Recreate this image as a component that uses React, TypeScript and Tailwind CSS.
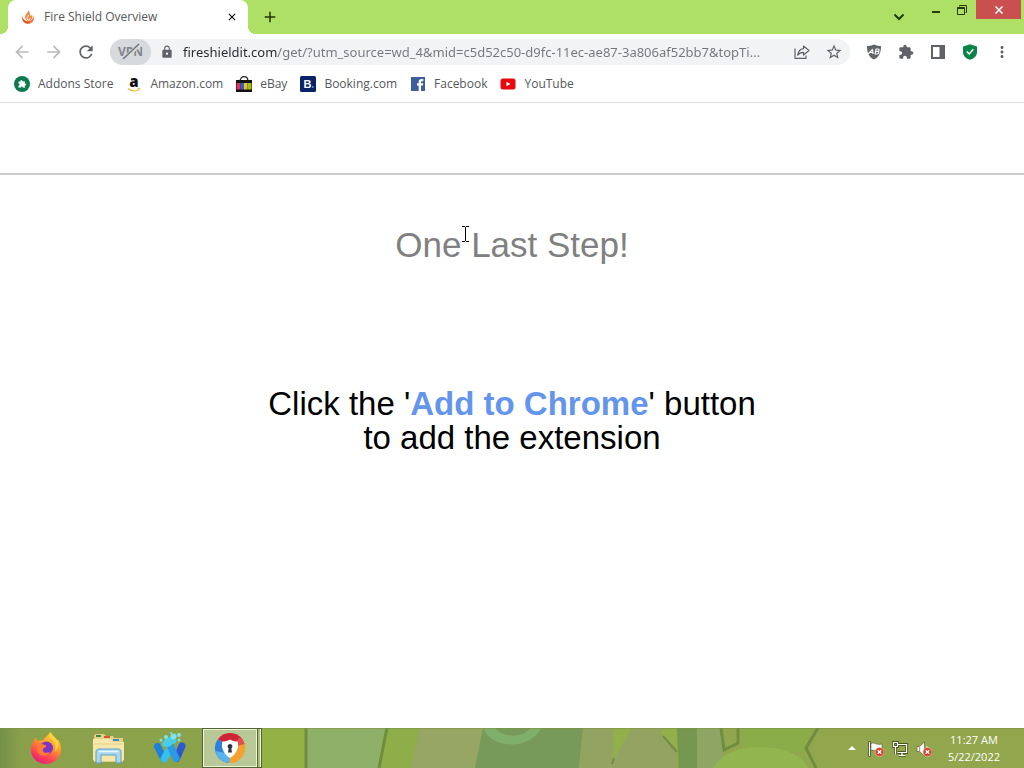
import { useState } from 'react';
import type { ReactNode } from 'react';
import {
  MdAdd,
  MdArrowBack,
  MdArrowForward,
  MdClose,
  MdExtension,
  MdLock,
  MdMoreVert,
  MdRefresh,
  MdStarBorder,
} from 'react-icons/md';

const PAGE_URL =
  'fireshieldit.com/get/?utm_source=wd_4&mid=c5d52c50-d9fc-11ec-ae87-3a806af52bb7&topTi...';

/* ---------- Icons ---------- */

const FlameIcon = () => (
  <svg className="w-4 h-4" viewBox="0 0 16 16" aria-hidden="true">
    <path d="M2 6c-1 5 2 9 6 9s7-4 6-9c-.3 4-3 6-6 6S2.500 10 2 6z" fill="#e8743b" />
    <path d="M8 1c1 2-3 4-3 7 0 2 1.500 4 3.500 4S12.500 10 12.500 8c0-1-.5-2-1-2.500 0 1-.5 1.500-1 1.500C10 5 10 3 8 1z" fill="#f08a4b" />
    <path d="M8.500 6c0 1.500-1.500 2-1.500 3.500 0 .8.600 1.500 1.500 1.500S10 10.300 10 9.500" fill="none" stroke="#fff" strokeWidth="1" />
    <path d="M3 10.500c1 2 3 3 5 2.800" fill="none" stroke="#b9492c" strokeWidth="1" />
  </svg>
);

const ShareIcon = () => (
  <svg className="w-4 h-4" viewBox="0 0 16 16" fill="none" stroke="#5f6368" strokeWidth="1.200" strokeLinejoin="round" aria-hidden="true">
    <path d="M1 4.500V14.300H12V11.500" />
    <path d="M9.500 2L15 6.500L9.500 11V8.300C6.500 8.300 5 9.300 3.700 11.200C4.200 7.500 6.200 5 9.500 4.600Z" />
  </svg>
);

const AdblockIcon = () => (
  <svg className="w-4 h-4" viewBox="0 0 16 16" aria-hidden="true">
    <path d="M8 0.500C5.500 1.500 3 2 1 2c0 6 1.500 11 7 13.500C13.500 13 15 8 15 2 13 2 10.500 1.500 8 .5z" fill="#5f6368" />
    <g fill="none" stroke="#fff" strokeWidth="1.200" strokeLinejoin="round">
      <path d="M2 10L6.500 5.500L7 10M4 8.500H7" />
      <path d="M9 10L10 5h2.200c1.400.2 1.200 2.200-.3 2.300H10h1.900c1.400.2 1 2.600-.6 2.700z" />
    </g>
  </svg>
);

const SidePanelIcon = () => (
  <svg className="w-4 h-4" viewBox="0 0 16 16" aria-hidden="true">
    <path d="M1 1h14v14H1zM3 3v10h6.500V3z" fill="#5f6368" fillRule="evenodd" />
  </svg>
);

const ShieldCheckIcon = () => (
  <svg className="w-4 h-4" viewBox="0 0 16 16" aria-hidden="true">
    <path d="M8 .3L15 2.500V8c0 4-3 6.600-7 7.800C4 14.600 1 12 1 8V2.500z" fill="#0a8449" />
    <path d="M4.800 7.600L7.200 10L11.300 5.300" fill="none" stroke="#fff" strokeWidth="1.500" />
  </svg>
);

const AddonsIcon = () => (
  <svg className="w-4 h-4" viewBox="0 0 16 16" aria-hidden="true">
    <circle cx="8" cy="8" r="8" fill="#0c7c50" />
    <path d="M4.500 5.500h2c-.5-2 2-2.200 1.800-.2l2.700.2-.3 2c2-.2 2 2.300 0 2l.3 2.300-2.300-.3c0-1.500-2-1.500-2 .3l-2.200-.3v-2c1.600 0 1.600-2 0-2z" fill="#fff" />
  </svg>
);

const AmazonIcon = () => (
  <svg className="w-4 h-4 overflow-visible" viewBox="0 0 16 16" aria-hidden="true">
    <text x="8" y="11" textAnchor="middle" fontFamily="Open Sans, sans-serif" fontWeight="800" fontSize="15" fill="#111">a</text>
    <path d="M2 12.500c3.500 3 8 3 11 1" fill="none" stroke="#f2b632" strokeWidth="1.200" />
    <path d="M11.500 12.500l2.300-.1-.6 2" fill="none" stroke="#f2b632" strokeWidth=".8" />
  </svg>
);

const EbayIcon = () => (
  <svg className="w-4 h-4" viewBox="0 0 16 16" aria-hidden="true">
    <path d="M4 5.500C4-1 12-1 12 5.500" fill="none" stroke="#222" strokeWidth="1.200" />
    <path d="M0 4h16v12H0z" fill="#111" />
    <path d="M.5 7h4v6.500h-4z" fill="#e0334c" />
    <path d="M4.500 7H8v6.500H4.500z" fill="#2a64c8" />
    <path d="M8 7h3.500v6.500H8z" fill="#e9c51d" />
    <path d="M11.500 7h4v6.500h-4z" fill="#a9b82a" />
  </svg>
);

const BookingIcon = () => (
  <svg className="w-4 h-4" viewBox="0 0 16 16" aria-hidden="true">
    <rect width="16" height="16" rx="1.500" fill="#0a2468" />
    <text x="3.500" y="12" fontFamily="Liberation Sans, sans-serif" fontWeight="700" fontSize="11" fill="#fff">B</text>
    <circle cx="12.800" cy="11" r="1" fill="#3fa9ea" />
  </svg>
);

const FacebookIcon = () => (
  <svg className="w-4 h-4" viewBox="0 0 16 16" aria-hidden="true">
    <path d="M1 1h14v14H1z" fill="#3f5c9f" />
    <path d="M8.700 15V9.500H7V7.300h1.700V5.700C8.700 3.900 9.800 3 11.500 3H13.300v2.200H12c-.8 0-1 .4-1 1v1.100h2.200l-.3 2.200H11V15z" fill="#fff" />
  </svg>
);

const YoutubeIcon = () => (
  <svg className="w-4 h-4" viewBox="0 0 16 16" aria-hidden="true">
    <rect x="0.500" y="2.500" width="15" height="11" rx="2.500" fill="#e8090d" />
    <path d="M6.400 5.700v4.600L10.400 8z" fill="#fff" />
  </svg>
);

const FirefoxIcon = () => (
  <svg className="w-8 h-8" viewBox="0 0 32 32" aria-hidden="true">
    <defs>
      <linearGradient id="fox" x1="0.8" y1="0" x2="0.300" y2="1">
        <stop offset="0" stopColor="#ffe23f" />
        <stop offset=".4" stopColor="#ff9a2c" />
        <stop offset=".75" stopColor="#ff4553" />
        <stop offset="1" stopColor="#e3177c" />
      </linearGradient>
    </defs>
    <path d="M20 0c1 3 3 4 5.500 7C27 8 28 9 28 7.500c3 4 3.500 9 2.500 13C29 27 23 32 16 32S2 27 1 20c-.5-4 .5-8 3-11l.6-3C6 6.500 7 8 7.500 9c2-1 4-1 5.500-.5C14 6 18 4 20 0z" fill="url(#fox)" />
    <circle cx="16.500" cy="16" r="6.500" fill="#7a35c9" />
    <path d="M7 12c3-2 5 .5 8 1 2 .5 2 1.500 0 2.500-2 1-2.500 2-2 3.500 1 2.500 5 2 7 1-3 6-13 4.500-13-3z" fill="#ff7a36" />
    <path d="M19 5c6 4 8 9 5.500 15 5-4 5-11 0-15-2-2-3-3-3.500-5-1 2-2 3-2 5z" fill="#ffd33a" />
  </svg>
);

const ExplorerIcon = () => (
  <svg className="w-8 h-8" viewBox="0 0 32 32" aria-hidden="true">
    <path d="M2 4c0-1 1-2 2-2h8l2 2h7l1 2h9v24H2z" fill="#e6cf7e" />
    <path d="M4 3h5v2H4z" fill="#3d8a48" />
    <path d="M12 4h6v2h-6z" fill="#cf5b3a" />
    <path d="M21 7h6v2h-6z" fill="#3a8dd0" />
    <path d="M1 7h18l2 3h11v17c0 1-1 2-2 2H3c-1 0-2-1-2-2z" fill="#f6e8ab" />
    <path d="M2 12h29" stroke="#e3ce87" />
    <path d="M4 31V20c0-2 1-3 3-3h19c2 0 3 1 3 3v11h-5v-8H9v8z" fill="#a8d7ee" stroke="#5c9fc9" />
    <path d="M7 19.500h19" stroke="#e8f8ff" strokeWidth="1.500" />
  </svg>
);

const WaveIcon = () => (
  <svg className="w-8 h-8" viewBox="0 0 32 32" aria-hidden="true">
    <g fill="none" strokeLinecap="round" strokeLinejoin="round">
      <path d="M3.500 14.500L9.500 26.500" stroke="#1f7fdc" strokeWidth="7" />
      <path d="M10 27L15.500 17" stroke="#35c0ee" strokeWidth="7" />
      <path d="M22.500 26.500L28 14" stroke="#2c58cf" strokeWidth="7" />
      <path d="M15.500 12L22 26.500" stroke="#2a9be4" strokeWidth="7" />
    </g>
    <path d="M8 12c2-5 7-8 12-6 2 1 3 3 2 5-4 0-5 4-9 4-3 0-5-1-5-3z" fill="#48cdea" />
    <g fill="#7fe2ef">
      <circle cx="12" cy="5" r="2" />
      <circle cx="19.500" cy="4.500" r="3" />
      <circle cx="25" cy="3" r="2" />
      <circle cx="25" cy="8" r="1.500" />
      <circle cx="7" cy="8" r="1.500" />
      <circle cx="17" cy="1" r="1" />
    </g>
  </svg>
);

const SecureBrowserIcon = () => (
  <svg className="w-8 h-8" viewBox="0 0 32 32" aria-hidden="true">
    <path d="M16 16L4 7A15 15 0 0 1 30.500 12z" fill="#cf2436" />
    <path d="M16 16L26 5a15 15 0 0 1 4.500 7l.5 4z" fill="#e34f4a" />
    <path d="M16 16l14.500-4A15 15 0 0 1 15 31z" fill="#f5a12f" />
    <path d="M16 16l-1 15A15 15 0 0 1 4 7z" fill="#2c80dc" />
    <path d="M16 22l-1 9A15 15 0 0 1 1.500 19z" fill="#55b5ef" />
    <path d="M16 7.500c2.500 1.500 5 2 7.500 2 2 5-1 13-7.500 16.500C9.500 22.500 6.500 14.500 8.500 9.500c2.500 0 5-.5 7.500-2z" fill="#fff" />
    <path d="M16 12a2.500 2.500 0 0 1 1.300 4.600L18 20.500h-4l.7-3.900A2.500 2.500 0 0 1 16 12z" fill="#2b3346" />
  </svg>
);

const ErrorBadge = () => (
  <g>
    <circle cx="11.500" cy="11" r="4.500" fill="#d5402b" stroke="#f3d9c9" strokeWidth=".6" />
    <path d="M9.700 9.200l3.600 3.600M13.300 9.200l-3.600 3.600" stroke="#fff" strokeWidth="1.300" />
  </g>
);

const FlagIcon = () => (
  <svg className="w-4 h-4" viewBox="0 0 16 16" aria-hidden="true">
    <path d="M1.500.5v15" stroke="#3c4a1c" strokeWidth="3" />
    <path d="M1.500 1v14" stroke="#fff" strokeWidth="1.300" />
    <path d="M3 2.500c4-1.500 5 2 11 .5v7c-5 1.500-7-2-11-.5z" fill="#fff" stroke="#55612f" strokeWidth=".6" />
    <ErrorBadge />
  </svg>
);

const NetworkIcon = () => (
  <svg className="w-4 h-4" viewBox="0 0 16 16" fill="none" aria-hidden="true">
    <path d="M6 3.500h8.500v8H5.500M10 11.500v2.500M6.500 14.300h7M1.500 1.500h4v4h-4zM3.500 5.500v8" stroke="#46531f" strokeWidth="2.800" />
    <path d="M6 3.500h8.500v8H5.500M10 11.500v2.500M6.500 14.300h7M1.500 1.500h4v4h-4zM3.500 5.500v8" stroke="#fff" strokeWidth="1.200" />
  </svg>
);

const SpeakerIcon = () => (
  <svg className="w-4 h-4" viewBox="0 0 16 16" aria-hidden="true">
    <path d="M1 5.500h2.500L8.500 1v14L3.500 10.500H1z" fill="#fff" stroke="#55612f" strokeWidth=".7" />
    <path d="M3.700 5.500v5" stroke="#8b9a5c" />
    <path d="M10.500 5c1 1 1 2 .8 3" fill="none" stroke="#fff" />
    <ErrorBadge />
  </svg>
);

/* ---------- Browser ---------- */

const TabStrip = () => (
  <header className="flex h-[34px] bg-[#aee065] pl-2">
    <div className="relative flex items-center w-60 h-full pl-3 pr-2 bg-white rounded-t-lg before:content-[''] before:absolute before:-left-2 before:bottom-0 before:size-2 before:bg-[radial-gradient(circle_at_0_0,#aee065_8px,#fff_8px)] after:content-[''] after:absolute after:-right-2 after:bottom-0 after:size-2 after:bg-[radial-gradient(circle_at_100%_0,#aee065_8px,#fff_8px)]">
      <FlameIcon />
      <span className="flex-1 pl-2 truncate text-[#54585c]">Fire Shield Overview</span>
      <button className="flex items-center justify-center w-4 h-4" aria-label="Close tab">
        <MdClose className="w-3 h-3" />
      </button>
    </div>
    <button className="flex items-center justify-center w-11 text-[#22330c]" aria-label="New tab">
      <MdAdd className="w-[18px] h-[18px]" />
    </button>
    <div className="flex items-start ml-auto text-[#26380f]">
      <button className="flex items-center justify-center w-9 h-[34px] mr-[6px]" aria-label="Search tabs">
        <svg className="w-3 h-3" viewBox="0 0 12 12" fill="none" stroke="currentColor" strokeWidth="2">
          <path d="M1.500 3.500L6 8l4.500-4.500" />
        </svg>
      </button>
      <button className="flex items-center justify-center w-[26px] h-5" aria-label="Minimize">
        <svg className="w-3 h-3" viewBox="0 0 12 12" fill="currentColor">
          <path d="M2 7h8v2H2z" />
        </svg>
      </button>
      <button className="flex items-center justify-center w-[26px] h-5 mr-px" aria-label="Restore">
        <svg className="w-3 h-3" viewBox="0 0 12 12" fill="none" stroke="currentColor">
          <path d="M3.500 2.500v-1h7v7h-1" />
          <path d="M1.500 3.500h7v7h-7zM1.500 4.500h7" />
        </svg>
      </button>
      <button className="flex items-center justify-center w-[45px] h-[19px] mr-[3px] bg-[#c9504f] text-white" aria-label="Close window">
        <svg className="w-2 h-2" viewBox="0 0 8 8" fill="none" stroke="currentColor" strokeWidth="1.500">
          <path d="M.5.5l7 7M7.500.5l-7 7" />
        </svg>
      </button>
    </div>
  </header>
);

const ToolButton = ({ label, children }: { label: string; children: ReactNode }) => (
  <button className="flex items-center justify-center shrink-0 w-8 h-[26px] text-[#5f6368]" aria-label={label}>
    {children}
  </button>
);

const Toolbar = () => {
  const [url, setUrl] = useState(PAGE_URL);

  return (
    <div className="flex items-center h-9 px-[6px]">
      <div className="flex text-[#b9bbbe]">
        <button className="flex items-center justify-center w-8 h-[26px]" aria-label="Back">
          <MdArrowBack className="w-5 h-5" />
        </button>
        <button className="flex items-center justify-center w-8 h-[26px]" aria-label="Forward">
          <MdArrowForward className="w-5 h-5" />
        </button>
        <ToolButton label="Reload">
          <MdRefresh className="w-5 h-5" />
        </ToolButton>
      </div>
      <div className="flex flex-1 items-center min-w-0 h-[26px] mx-2 bg-[#f1f3f4] rounded-full">
        <button className="relative flex items-center justify-center shrink-0 w-[41px] h-[26px] bg-[#d6dadd] rounded-full font-bold text-[#80858a]">
          VPN
          <svg className="absolute inset-0 w-full h-full" viewBox="0 0 41 26" fill="none" aria-hidden="true">
            <path d="M14 20L29 6" stroke="#d6dadd" strokeWidth="4" />
            <path d="M13 20L29 5" stroke="#70757a" strokeWidth="1.500" />
          </svg>
        </button>
        <MdLock className="shrink-0 w-[14px] h-[14px] ml-[9px] text-[#5f6368]" />
        <input
          className="flex-1 min-w-0 h-6 ml-[9px] font-['Noto_Sans','Open_Sans',sans-serif] text-[13px] text-transparent caret-black truncate outline-none bg-[linear-gradient(90deg,#27282b_95px,#73777b_95px)] bg-clip-text"
          type="text"
          aria-label="Address and search bar"
          value={url}
          onChange={(e) => setUrl(e.target.value)}
        />
        <ToolButton label="Share this page">
          <ShareIcon />
        </ToolButton>
        <ToolButton label="Bookmark this page">
          <MdStarBorder className="w-[18px] h-[18px]" />
        </ToolButton>
      </div>
      <ToolButton label="Adblock">
        <AdblockIcon />
      </ToolButton>
      <ToolButton label="Extensions">
        <MdExtension className="w-4 h-4" />
      </ToolButton>
      <ToolButton label="Side panel">
        <SidePanelIcon />
      </ToolButton>
      <ToolButton label="Security">
        <ShieldCheckIcon />
      </ToolButton>
      <ToolButton label="Menu">
        <MdMoreVert className="w-[18px] h-[18px]" />
      </ToolButton>
    </div>
  );
};

const bookmarks = [
  { name: 'Addons Store', icon: <AddonsIcon /> },
  { name: 'Amazon.com', icon: <AmazonIcon /> },
  { name: 'eBay', icon: <EbayIcon /> },
  { name: 'Booking.com', icon: <BookingIcon /> },
  { name: 'Facebook', icon: <FacebookIcon /> },
  { name: 'YouTube', icon: <YoutubeIcon /> },
];

const BookmarksBar = () => (
  <nav className="flex items-center gap-[13px] h-[33px] px-[14px] pb-1 border-b border-[#dcdddf] text-[#54585c]">
    {bookmarks.map((b) => (
      <a key={b.name} href="#" className="flex items-center gap-2">
        {b.icon}
        {b.name}
      </a>
    ))}
  </nav>
);

/* ---------- Taskbar ---------- */

const TaskbarWallpaper = () => (
  <svg className="absolute inset-0 w-full h-full" viewBox="0 0 1024 40" preserveAspectRatio="none" aria-hidden="true">
    <defs>
      <linearGradient id="leaf">
        <stop offset="0" stopColor="#75904a" />
        <stop offset=".08" stopColor="#8aa04b" />
        <stop offset="1" stopColor="#8da34a" />
      </linearGradient>
    </defs>
    <path d="M0 0h1024v40H0z" fill="#92a64d" />
    <path d="M0 0h262v40H0z" fill="url(#leaf)" />
    <path d="M262 0h44v40h-44z" fill="#93b145" />
    <path d="M307 0h78l-7 40h-71z" fill="#8fb068" />
    <path d="M385 0h34l-8 40h-33z" fill="#8eae4a" />
    <path d="M419 0h64l-8 40h-64z" fill="#97a565" />
    <path d="M483 0h100l-4 40H475z" fill="#77995a" />
    <path d="M483 0c8 22 48 22 58 0h-10c-8 10-28 10-36 0z" fill="#80ae6b" />
    <path d="M583 0h94v40h-98z" fill="#93a462" />
    <path d="M614 0h17l-18 34zM661 6l16 20V0h-14z" fill="#93af49" />
    <path d="M677 0h20v40h-18z" fill="#75974f" />
    <path d="M697 0h26v34l-10 6h-16z" fill="#8fa563" />
    <path d="M742 0h70l-9 24-60-2z" fill="#8bad49" />
    <path d="M714 40c10-28 82-28 94 0z" fill="#93b54f" />
    <g fill="none" stroke="#6f8d3e" strokeWidth="3">
      <path d="M306 0v40M387 0l-8 40" />
      <path d="M721 0l3 22 14-7V0M818 0l-12 20 10 20" />
    </g>
    <path d="M614 30l-2 6M663 8l14 16" fill="none" stroke="#728d49" strokeWidth="2" />
    <path d="M0 .5h1024" stroke="#7c9245" strokeOpacity=".6" />
  </svg>
);

const TaskButton = ({ label, children }: { label: string; children: ReactNode }) => (
  <button className="flex items-center justify-center w-[62px] h-10" aria-label={label}>
    {children}
  </button>
);

const Taskbar = () => (
  <footer className="relative flex h-10 overflow-hidden">
    <TaskbarWallpaper />
    <div className="relative flex pl-[15px]">
      <TaskButton label="Firefox">
        <FirefoxIcon />
      </TaskButton>
      <TaskButton label="File Explorer">
        <ExplorerIcon />
      </TaskButton>
      <TaskButton label="WaveBrowser">
        <WaveIcon />
      </TaskButton>
      <button className="flex w-[60px] h-10 ml-px border border-[#526330] bg-[#a9bd74]" aria-label="Secure Browser">
        <span className="flex items-center justify-center flex-1 h-full border border-[#eef4da] bg-[#b9c897]">
          <SecureBrowserIcon />
        </span>
        <span className="w-1 h-full border-x border-l-[#526330] border-r-[#eef4da]" />
      </button>
    </div>
    <div className="relative flex items-center ml-auto pr-6 text-white">
      <button className="flex items-center justify-center w-8 h-10" aria-label="Show hidden icons">
        <svg className="w-2 h-1" viewBox="0 0 8 4" fill="currentColor">
          <path d="M0 4L4 0l4 4z" />
        </svg>
      </button>
      <div className="flex gap-2 pt-[2px]">
        <FlagIcon />
        <NetworkIcon />
        <SpeakerIcon />
      </div>
      <time className="ml-4 text-center text-[11px] leading-[17px]">
        11:27 AM
        <br />
        5/22/2022
      </time>
    </div>
  </footer>
);

/* ---------- Page ---------- */

const Overview = () => (
  <main className="flex-1 text-center font-['Liberation_Sans',Arial,sans-serif]">
    <div className="h-[72px] border-b-2 border-[#cccccc]" />
    <h1 className="relative mt-[50px] text-[35px] leading-10 text-[#808080]">
      One Last Step!
      <svg className="absolute left-1/2 top-px -ml-[51px] w-[9px] h-4" viewBox="0 0 9 16" fill="none" stroke="#000" aria-hidden="true">
        <path d="M1 .5h3M5 .5h3M4.500 1v14M1 15.500h3M5 15.500h3" />
      </svg>
    </h1>
    <p className="mt-[122px] text-[33px] leading-[34px] text-black">
      Click the &apos;<strong className="text-[#6495ed]">Add to Chrome</strong>&apos; button
      <br />
      to add the extension
    </p>
  </main>
);

export default function App() {
  return (
    <div className="flex flex-col min-h-screen bg-white text-xs font-['Open_Sans','Noto_Sans',sans-serif]">
      <TabStrip />
      <Toolbar />
      <BookmarksBar />
      <Overview />
      <Taskbar />
    </div>
  );
}
